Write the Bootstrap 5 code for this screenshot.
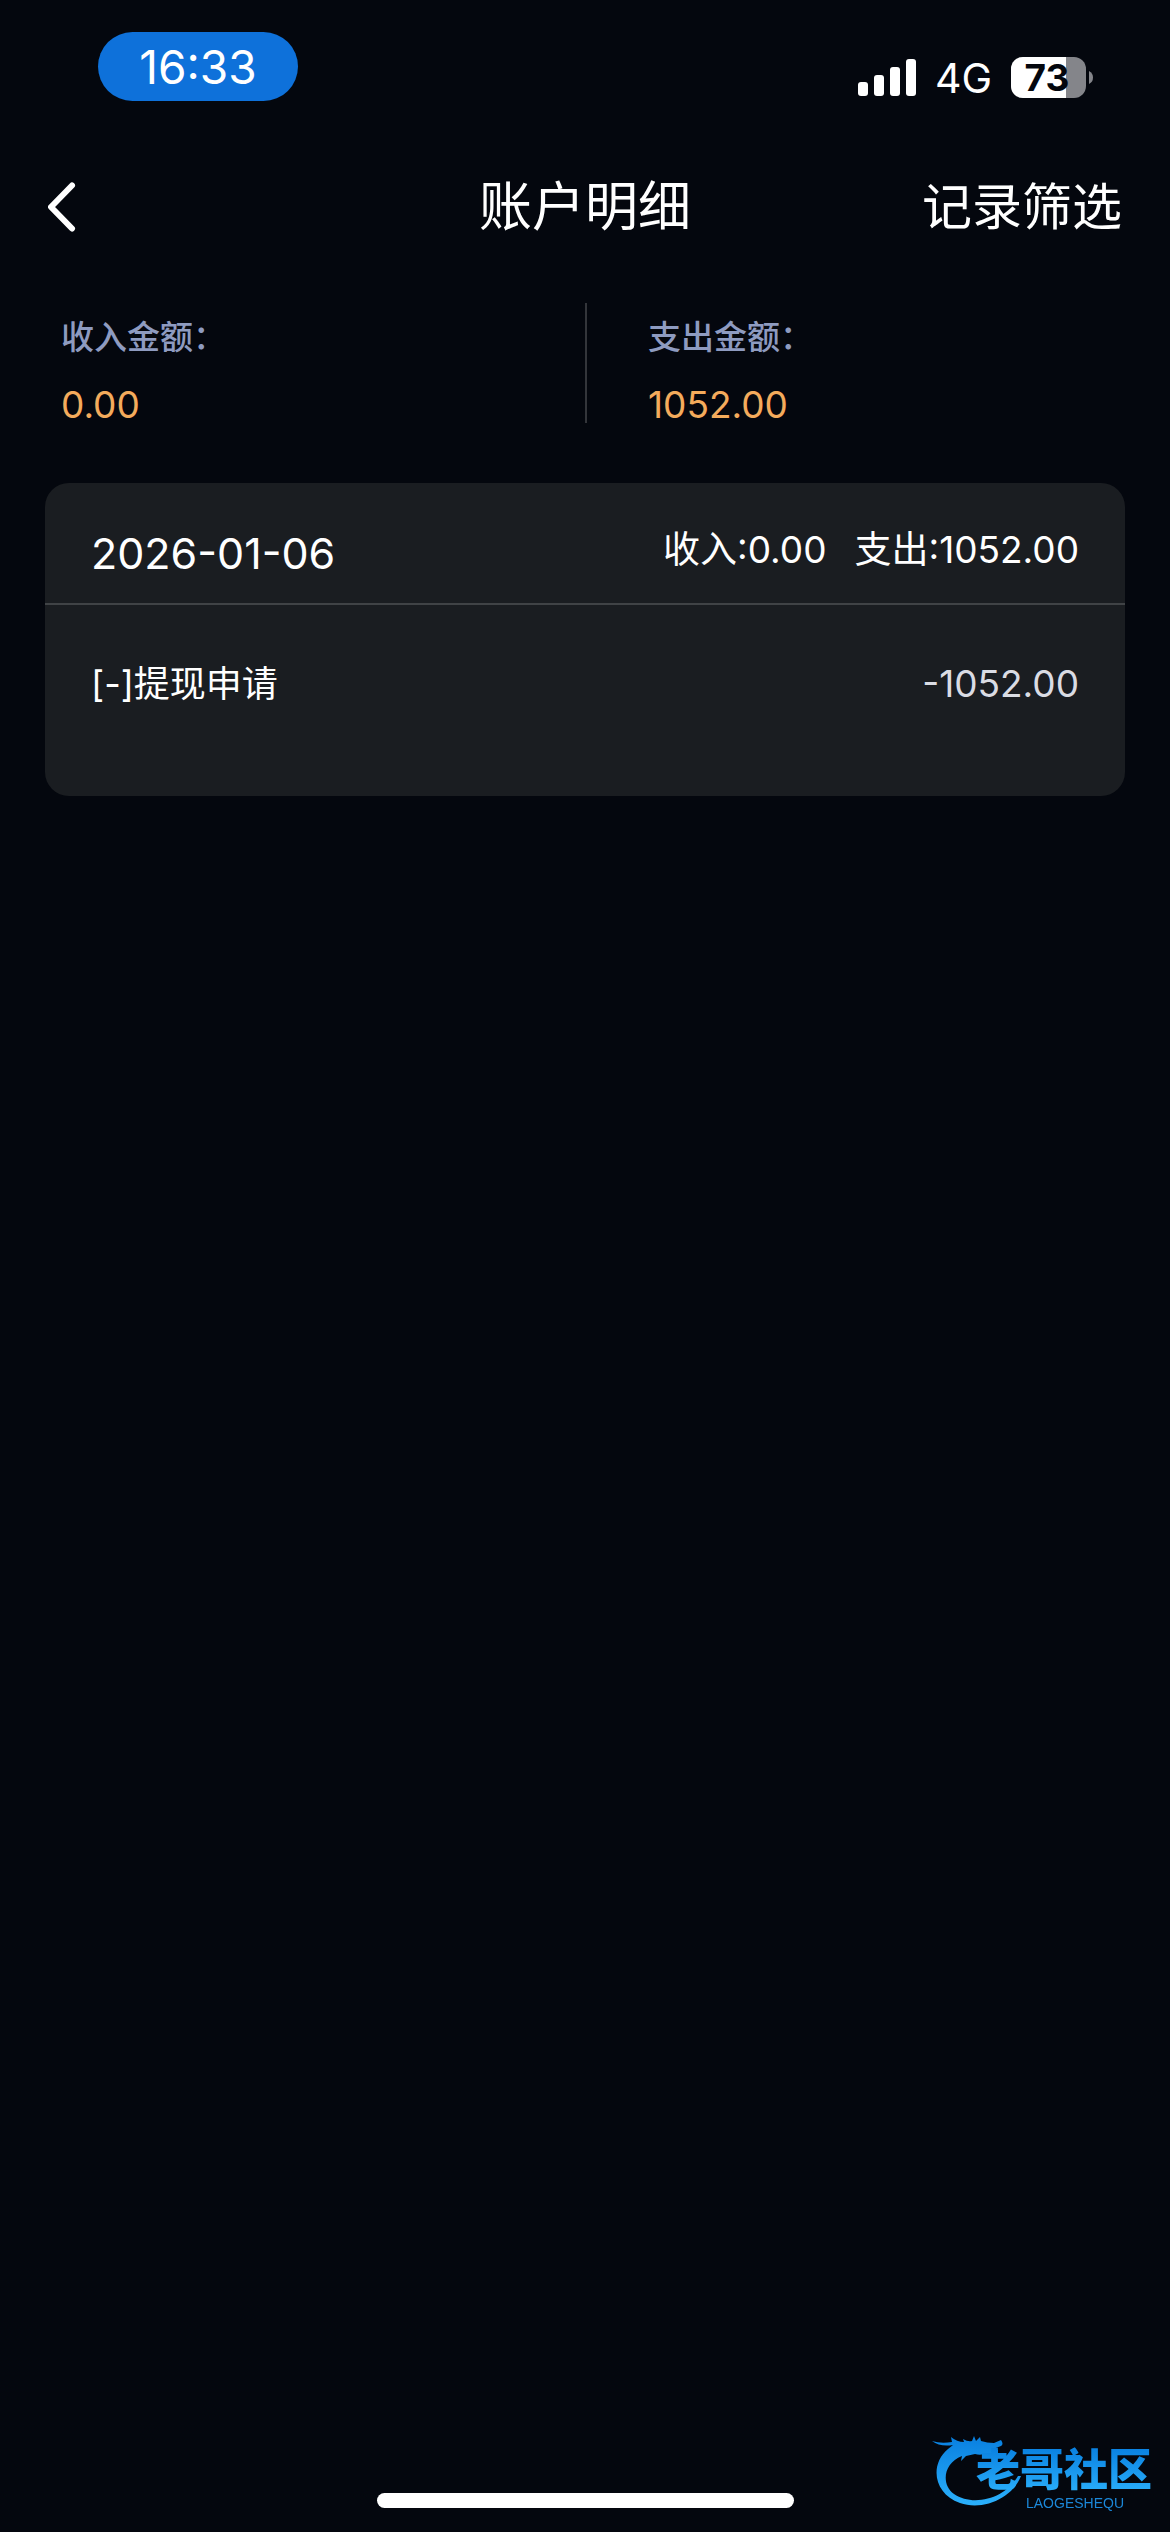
<!DOCTYPE html>
<html lang="zh-CN">
<head>
<meta charset="utf-8">
<meta name="viewport" content="width=device-width, initial-scale=1">
<title>账户明细</title>
<link href="https://cdn.jsdelivr.net/npm/bootstrap@5.3.0/dist/css/bootstrap.min.css" rel="stylesheet">
<style>
body { background: #04070e; color: #fff; font-family: Inter, "Noto Sans CJK SC", sans-serif; font-size: 36px; line-height: 48px; }
.status-bar { padding: 32px 76px 0 98px; height: 128px; }
.time-pill { background: #0e71da; width: 200px; height: 69px; font-size: 46px; }
.network { font-size: 41px; }
.status-icons { gap: 19px; padding-top: 22px; height: 69px; }
.battery-text { font: 700 37px Inter, sans-serif; }
.title-bar { height: 158px; padding: 0 48px; }
.title-bar h1 { font-size: 53px; line-height: 64px; }
.filter-btn { font-size: 50px; line-height: 64px; }
.totals { padding: 17px 0 60px; }
.totals > div { height: 120px; padding: 10px 61px 0; gap: 20px; }
.totals > div + div { border-left: 2px solid #33353a; }
.total-label { color: #8e9bc0; font-size: 33px; font-weight: 500; }
.total-value { color: #f4ab5c; font-size: 37px; }
.record-card { background: #1a1d21; border-radius: 24px; margin: 0 45px; }
.record-head { border-bottom: 2px solid #404346; padding: 0 46px; height: 122px; }
.record-date { font-size: 43px; padding-top: 20px; }
.record-sums { font-size: 37px; gap: 28px; padding-top: 14px; }
.record-row { padding: 55px 46px 88px; }
.record-amount { color: #dadce4; font-size: 37px; }
.home-bar { width: 417px; height: 15px; }
.brand { right: 12px; bottom: 16px; }
.brand-name { font: 900 44px "Liberation Sans", "Noto Sans CJK SC", sans-serif; }
.brand-latin { font: 500 14px "Liberation Sans", sans-serif; }
</style>
</head>
<body class="d-flex flex-column min-vh-100">
<div class="status-bar d-flex justify-content-between align-items-start">
  <div class="time-pill rounded-pill d-flex align-items-center justify-content-center">16:33</div>
  <div class="status-icons d-flex align-items-center">
    <svg width="58" height="37" viewBox="0 0 58 37" fill="#fff" aria-hidden="true"><rect y="23" width="10" height="14" rx="3"/><rect x="16" y="16" width="10" height="21" rx="3"/><rect x="32" y="8" width="10" height="29" rx="3"/><rect x="48" width="10" height="37" rx="3"/></svg>
    <span class="network">4G</span>
    <svg width="83" height="49" viewBox="0 -4 83 49" role="img" aria-label="73%">
      <defs><clipPath id="cell"><rect width="75" height="41" rx="12"/></clipPath></defs>
      <g clip-path="url(#cell)"><rect width="75" height="41" fill="#84858a"/><rect width="55" height="41" fill="#fff"/></g>
      <path d="M78 14q4 2 4 6.500t-4 6.500z" fill="#84858a"/>
      <text class="battery-text" x="36" y="34" text-anchor="middle" fill="#04070e">73</text>
    </svg>
  </div>
</div>
<header class="title-bar row g-0 align-items-center">
  <div class="col d-flex"><a href="#" aria-label="返回" class="d-flex"><svg width="34" height="54" viewBox="0 0 34 54" fill="none" stroke="#fff" stroke-width="6" stroke-linecap="round" stroke-linejoin="round" aria-hidden="true"><path d="M24 5.500 3 27l21 21.500"/></svg></a></div>
  <h1 class="col-auto m-0 fw-normal">账户明细</h1>
  <div class="col text-end"><button type="button" class="filter-btn btn p-0 border-0 text-white">记录筛选</button></div>
</header>
<main>
  <section class="totals row g-0">
    <div class="col-6 d-flex flex-column"><span class="total-label">收入金额：</span><span class="total-value">0.00</span></div>
    <div class="col-6 d-flex flex-column"><span class="total-label">支出金额：</span><span class="total-value">1052.00</span></div>
  </section>
  <section class="record-card">
    <div class="record-head d-flex justify-content-between align-items-center">
      <span class="record-date">2026-01-06</span>
      <div class="record-sums d-flex"><span>收入:0.00</span><span>支出:1052.00</span></div>
    </div>
    <div class="record-row d-flex justify-content-between"><span>[-]提现申请</span><span class="record-amount">-1052.00</span></div>
  </section>
</main>
<footer class="mt-auto d-flex justify-content-center pb-4"><div class="home-bar bg-white rounded-pill"></div></footer>
<div class="brand position-fixed">
  <svg width="226" height="84" viewBox="0 0 226 84" role="img" aria-label="老哥社区">
    <defs><linearGradient id="sea" x1="0" y1="0" x2="0" y2="1"><stop offset="0" stop-color="#087fe0"/><stop offset="1" stop-color="#2bb0fb"/></linearGradient></defs>
    <path fill="url(#sea)" d="M0 9q9 3 20 1l-1-5q6 5 13 5l-1-3q5 3 9 2l2-5 2 5 4-4 1 4q6 2 13 2l7-3q3 4 0 6l-8 3 5 1v4q-6 1-11-1-6 3-12 1l-9 2-5 5 1-5C11 31 9 53 22 62c19 13 51 5 64-18l3 0C80 67 50 79 28 71 2 62-3 33 16 17l5-4Q8 15 0 9z"/>
    <text class="brand-name" x="44" y="54" fill="url(#sea)">老哥社区</text>
    <text class="brand-latin" x="94" y="76" fill="#1b87d8">LAOGESHEQU</text>
  </svg>
</div>
<script src="https://cdn.jsdelivr.net/npm/bootstrap@5.3.0/dist/js/bootstrap.bundle.min.js"></script>
</body>
</html>
